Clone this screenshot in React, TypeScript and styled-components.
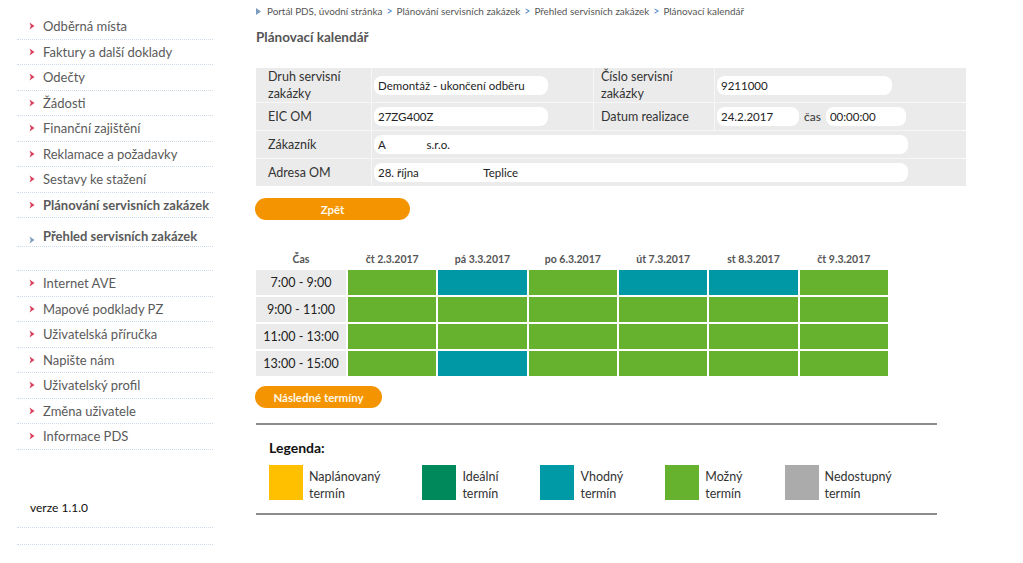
import React from 'react'
import styled, { createGlobalStyle } from 'styled-components'

const GlobalStyle = createGlobalStyle`
  html, body {
    margin: 0;
    padding: 0;
    background: #ffffff;
  }
  body {
    font-family: Lato, "Open Sans", "DejaVu Sans", sans-serif;
    color: #555;
  }
`

const Page = styled.div`
  display: flex;
  width: 1023px;
  height: 563px;
  overflow: hidden;
`

const Sidebar = styled.nav`
  width: 196px;
  margin-left: 17px;
  padding-top: 14px;
  flex-shrink: 0;
`

const MenuList = styled.ul<{ $top?: boolean }>`
  list-style: none;
  margin: 0;
  padding: 0;
  ${p => p.$top ? 'margin-top: 23px; border-top: 1px dotted #cfdbe6;' : ''}
`

const MenuItem = styled.li<{ $bold?: boolean; $tall?: boolean }>`
  display: flex;
  align-items: ${p => p.$tall ? 'flex-end' : 'center'};
  height: ${p => p.$tall ? '29px' : '25.5px'};
  box-sizing: border-box;
  padding-bottom: ${p => p.$tall ? '2px' : '0'};
  border-bottom: 1px dotted #cfdbe6;
  font-size: 13px;
  font-weight: ${p => p.$bold ? 700 : 400};
  color: #5a5a5a;
  white-space: nowrap;
`

const Arrow = styled.svg`
  width: 6px;
  height: 8px;
  margin-left: 12px;
  margin-right: 8px;
  flex-shrink: 0;
`

const Version = styled.div`
  margin-top: 48px;
  padding: 0 0 10px 13px;
  height: 19px;
  font-size: 12px;
  color: #111;
  border-bottom: 1px dotted #cfdbe6;
  display: flex;
  align-items: center;
`

const Spacer = styled.div`
  height: 16px;
  border-bottom: 1px dotted #cfdbe6;
`

const Main = styled.main`
  margin-left: 43px;
  width: 681px;
  display: flex;
  flex-direction: column;
`

const Breadcrumb = styled.div`
  display: flex;
  align-items: center;
  gap: 4px;
  height: 22px;
  font-size: 9.9px;
  color: #555;
  white-space: nowrap;
`

const CrumbSep = styled.span`
  color: #4a86c5;
  font-size: 10.5px;
`

const Title = styled.h1`
  margin: 7px 0 0 0;
  font-size: 13.5px;
  font-weight: 700;
  color: #555;
  height: 18px;
`

const FormGrid = styled.div`
  margin-top: 21px;
  width: 707px;
  display: grid;
  grid-template-columns: 115px 221px 120px 251px;
  grid-template-rows: 34px 27px 27px 27px;
  column-gap: 1px;
  row-gap: 1px;
  background: #f6f6f6;
`

const Label = styled.div<{ $inner?: boolean }>`
  background: #ebebeb;
  padding: 0 6px 0 ${p => p.$inner ? '7px' : '12px'};
  display: flex;
  align-items: center;
  font-size: 12.5px;
  line-height: 17px;
  color: #333;
`

const ValueCell = styled.div<{ $span?: boolean }>`
  background: #ebebeb;
  display: flex;
  align-items: center;
  gap: 5px;
  padding-left: 2px;
  ${p => p.$span ? 'grid-column: 2 / 5;' : ''}
`

const Field = styled.div<{ $w: number }>`
  width: ${p => p.$w}px;
  height: 19px;
  box-sizing: border-box;
  background: #ffffff;
  border-radius: 8px;
  padding: 0 4px;
  display: flex;
  align-items: center;
  font-size: 11.5px;
  color: #222;
  white-space: pre;
`

const TimeLabel = styled.span`
  font-size: 12px;
  color: #333;
`

const OrangeButton = styled.button<{ $w: number }>`
  width: ${p => p.$w}px;
  height: 22px;
  border: none;
  border-radius: 11px;
  background: #f39400;
  color: #fff8e8;
  font-family: Lato, "Open Sans", sans-serif;
  font-size: 11.5px;
  font-weight: 700;
  padding: 0;
  cursor: pointer;
`

const ZpetButton = styled(OrangeButton)`
  margin-top: 12px;
  margin-left: -1px;
`

const Calendar = styled.div`
  margin-top: 29px;
  width: 632px;
  display: grid;
  grid-template-columns: 90px repeat(6, 1fr);
  grid-auto-rows: 25px;
  grid-template-rows: 19px;
  gap: 2px;
`

const HeadCell = styled.div`
  display: flex;
  align-items: center;
  justify-content: center;
  font-size: 10.5px;
  font-weight: 700;
  color: #555;
`

const TimeCell = styled.div`
  background: #ebebeb;
  display: flex;
  align-items: center;
  justify-content: center;
  font-size: 12.5px;
  color: #222;
`

const Slot = styled.div<{ $kind: 'ok' | 'good' }>`
  background: ${p => p.$kind === 'good' ? '#0098a4' : '#66b22e'};
`

const NextButton = styled(OrangeButton)`
  margin-top: 10px;
  margin-left: -1px;
`

const Legend = styled.section`
  margin-top: 15px;
  width: 681px;
  border-top: 2px solid #8c8c8c;
  border-bottom: 2px solid #8c8c8c;
  padding: 14px 0 12px 13px;
  box-sizing: border-box;
  height: 92px;
`

const LegendTitle = styled.div`
  font-size: 14px;
  font-weight: 700;
  color: #111;
  margin-bottom: 9px;
`

const LegendRow = styled.div`
  display: flex;
  gap: 42px;
`

const LegendItem = styled.div`
  display: flex;
  gap: 6px;
`

const Swatch = styled.div<{ $color: string }>`
  width: 34px;
  height: 35px;
  background: ${p => p.$color};
  flex-shrink: 0;
`

const LegendText = styled.div`
  font-size: 12.5px;
  line-height: 17px;
  color: #333;
  padding-top: 3px;
`

const menuTop = [
  'Odběrná místa',
  'Faktury a další doklady',
  'Odečty',
  'Žádosti',
  'Finanční zajištění',
  'Reklamace a požadavky',
  'Sestavy ke stažení',
]

const menuBottom = [
  'Internet AVE',
  'Mapové podklady PZ',
  'Uživatelská příručka',
  'Napište nám',
  'Uživatelský profil',
  'Změna uživatele',
  'Informace PDS',
]

const days = ['čt 2.3.2017', 'pá 3.3.2017', 'po 6.3.2017', 'út 7.3.2017', 'st 8.3.2017', 'čt 9.3.2017']

const slots: { time: string; good: number[] }[] = [
  { time: '7:00 - 9:00', good: [1, 3, 4] },
  { time: '9:00 - 11:00', good: [] },
  { time: '11:00 - 13:00', good: [] },
  { time: '13:00 - 15:00', good: [1] },
]

const legend = [
  { color: '#ffc000', a: 'Naplánovaný', b: 'termín' },
  { color: '#008a5c', a: 'Ideální', b: 'termín' },
  { color: '#0099a6', a: 'Vhodný', b: 'termín' },
  { color: '#66b22e', a: 'Možný', b: 'termín' },
  { color: '#ababab', a: 'Nedostupný', b: 'termín' },
]

const MenuArrow: React.FC<{ color?: string }> = ({ color = '#d8405e' }) => (
  <Arrow viewBox="0 0 6 8">
    <path d="M0.5 0.5 L5.5 4 L0.5 7.5 L1.8 4 Z" fill={color} />
  </Arrow>
)

const App: React.FC = () => {
  return (
    <>
      <GlobalStyle />
      <Page>
        <Sidebar>
          <MenuList>
            {menuTop.map(item => (
              <MenuItem key={item}>
                <MenuArrow />
                {item}
              </MenuItem>
            ))}
            <MenuItem $bold>
              <MenuArrow />
              Plánování servisních zakázek
            </MenuItem>
            <MenuItem $bold $tall>
              <MenuArrow color="#7d9cc0" />
              Přehled servisních zakázek
            </MenuItem>
          </MenuList>
          <MenuList $top>
            {menuBottom.map(item => (
              <MenuItem key={item}>
                <MenuArrow />
                {item}
              </MenuItem>
            ))}
          </MenuList>
          <Version>verze 1.1.0</Version>
          <Spacer />
        </Sidebar>

        <Main>
          <Breadcrumb>
            <svg width="5" height="7" viewBox="0 0 5 7" style={{ marginRight: 2 }}>
              <path d="M0 0 L5 3.5 L0 7 Z" fill="#7d9cc0" />
            </svg>
            <span>Portál PDS, úvodní stránka</span>
            <CrumbSep>&gt;</CrumbSep>
            <span>Plánování servisních zakázek</span>
            <CrumbSep>&gt;</CrumbSep>
            <span>Přehled servisních zakázek</span>
            <CrumbSep>&gt;</CrumbSep>
            <span>Plánovací kalendář</span>
          </Breadcrumb>
          <Title>Plánovací kalendář</Title>

          <FormGrid>
            <Label>Druh servisní zakázky</Label>
            <ValueCell><Field $w={174}>Demontáž - ukončení odběru</Field></ValueCell>
            <Label $inner>Číslo servisní zakázky</Label>
            <ValueCell><Field $w={175}>9211000</Field></ValueCell>

            <Label>EIC OM</Label>
            <ValueCell><Field $w={174}>27ZG400Z</Field></ValueCell>
            <Label $inner>Datum realizace</Label>
            <ValueCell>
              <Field $w={82}>24.2.2017</Field>
              <TimeLabel>čas</TimeLabel>
              <Field $w={80}>00:00:00</Field>
            </ValueCell>

            <Label>Zákazník</Label>
            <ValueCell $span><Field $w={534}>{'A              s.r.o.'}</Field></ValueCell>

            <Label>Adresa OM</Label>
            <ValueCell $span><Field $w={534}>{'28. října                      Teplice'}</Field></ValueCell>
          </FormGrid>

          <ZpetButton $w={155}>Zpět</ZpetButton>

          <Calendar>
            <HeadCell>Čas</HeadCell>
            {days.map(d => <HeadCell key={d}>{d}</HeadCell>)}
            {slots.map(row => (
              <React.Fragment key={row.time}>
                <TimeCell>{row.time}</TimeCell>
                {days.map((d, i) => (
                  <Slot key={d} $kind={row.good.includes(i) ? 'good' : 'ok'} />
                ))}
              </React.Fragment>
            ))}
          </Calendar>

          <NextButton $w={127}>Následné termíny</NextButton>

          <Legend>
            <LegendTitle>Legenda:</LegendTitle>
            <LegendRow>
              {legend.map(l => (
                <LegendItem key={l.a}>
                  <Swatch $color={l.color} />
                  <LegendText>{l.a}<br />{l.b}</LegendText>
                </LegendItem>
              ))}
            </LegendRow>
          </Legend>
        </Main>
      </Page>
    </>
  )
}

export default App
